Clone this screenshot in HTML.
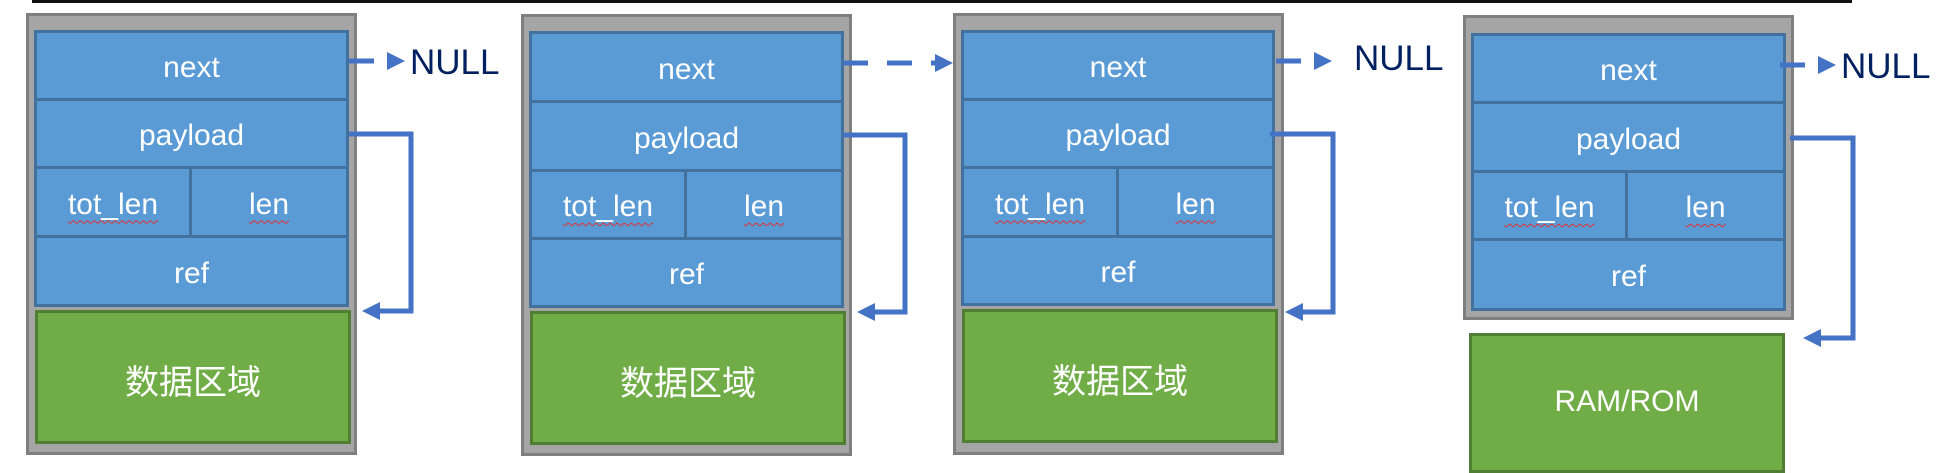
<!DOCTYPE html>
<html><head><meta charset="utf-8"><style>
body{margin:0;width:1958px;height:463px;background:#fff;position:relative;overflow:hidden;font-family:"Liberation Sans","Noto Sans CJK SC",sans-serif}
.a{position:absolute;box-sizing:border-box}
.g{background:#a5a5a5;border:3px solid #7f7f7f}
.b{background:#5b9bd5;border:3px solid #41719c;color:#fff;font-size:30px;display:flex;align-items:center;justify-content:center;padding-top:5px}
.gr{background:#70ad47;border:3px solid #507e32;color:#fff;font-size:30px;display:flex;align-items:center;justify-content:center}
.zh{font-size:34px;padding-top:4px}
.w{text-decoration:underline wavy #e03030 1px;text-underline-offset:6px}
.n{position:absolute;color:#002060;font-size:35px}
</style></head><body>
<div class="a" style="left:32px;top:0;width:1820px;height:3px;background:#111"></div>

<!-- box1 -->
<div class="a g" style="left:26px;top:13px;width:331px;height:442px"></div>
<div class="a b" style="left:34px;top:30px;width:315px;height:71px">next</div>
<div class="a b" style="left:34px;top:98px;width:315px;height:71px">payload</div>
<div class="a b" style="left:34px;top:166px;width:158px;height:72px"><span class="w">tot_len</span></div>
<div class="a b" style="left:189px;top:166px;width:160px;height:72px"><span class="w">len</span></div>
<div class="a b" style="left:34px;top:235px;width:315px;height:72px">ref</div>
<div class="a gr zh" style="left:35px;top:310px;width:316px;height:134px">数据区域</div>

<!-- box2 -->
<div class="a g" style="left:521px;top:14px;width:331px;height:442px"></div>
<div class="a b" style="left:529px;top:31px;width:315px;height:72px">next</div>
<div class="a b" style="left:529px;top:100px;width:315px;height:72px">payload</div>
<div class="a b" style="left:529px;top:169px;width:158px;height:71px"><span class="w">tot_len</span></div>
<div class="a b" style="left:684px;top:169px;width:160px;height:71px"><span class="w">len</span></div>
<div class="a b" style="left:529px;top:237px;width:315px;height:71px">ref</div>
<div class="a gr zh" style="left:530px;top:311px;width:316px;height:134px">数据区域</div>

<!-- box3 -->
<div class="a g" style="left:953px;top:13px;width:331px;height:442px"></div>
<div class="a b" style="left:961px;top:30px;width:314px;height:71px">next</div>
<div class="a b" style="left:961px;top:98px;width:314px;height:71px">payload</div>
<div class="a b" style="left:961px;top:166px;width:158px;height:72px"><span class="w">tot_len</span></div>
<div class="a b" style="left:1116px;top:166px;width:159px;height:72px"><span class="w">len</span></div>
<div class="a b" style="left:961px;top:235px;width:314px;height:71px">ref</div>
<div class="a gr zh" style="left:962px;top:309px;width:316px;height:134px">数据区域</div>

<!-- box4 -->
<div class="a g" style="left:1463px;top:15px;width:331px;height:305px"></div>
<div class="a b" style="left:1471px;top:33px;width:315px;height:71px">next</div>
<div class="a b" style="left:1471px;top:101px;width:315px;height:72px">payload</div>
<div class="a b" style="left:1471px;top:170px;width:157px;height:71px"><span class="w">tot_len</span></div>
<div class="a b" style="left:1625px;top:170px;width:161px;height:71px"><span class="w">len</span></div>
<div class="a b" style="left:1471px;top:238px;width:315px;height:73px">ref</div>
<div class="a gr" style="left:1469px;top:333px;width:316px;height:140px;padding-bottom:2px">RAM/ROM</div>

<div class="n" style="left:410px;top:43px">NULL</div>
<div class="n" style="left:1354px;top:39px">NULL</div>
<div class="n" style="left:1841px;top:47px">NULL</div>

<svg class="a" style="left:0;top:0" width="1958" height="463">
<g stroke="#4472c4" stroke-width="5" fill="none">
<path d="M349 61H374"/>
<path d="M1276 61H1301"/>
<path d="M1780 65H1805"/>
<path d="M843 63H868M887 63H912M931 63H938" />
<path d="M349 134H411V311H375"/>
<path d="M843 135H905V312H870"/>
<path d="M1270 134H1333V312H1298"/>
<path d="M1790 138H1853V338H1816"/>
</g>
<g fill="#4472c4">
<path d="M387 52L405 61L387 70Z"/>
<path d="M1314 52L1332 61L1314 70Z"/>
<path d="M1818 56L1836 65L1818 74Z"/>
<path d="M935 54L953 63L935 72Z"/>
<path d="M362 311L380 302L380 320Z"/>
<path d="M857 312L875 303L875 321Z"/>
<path d="M1285 312L1303 303L1303 321Z"/>
<path d="M1803 338L1821 329L1821 347Z"/>
</g>
</svg>
</body></html>
